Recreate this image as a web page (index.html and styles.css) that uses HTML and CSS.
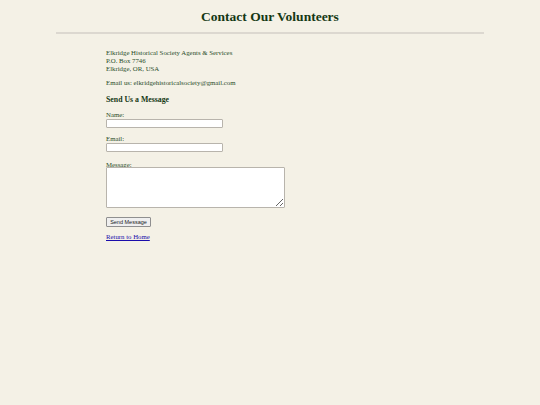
FILE: index.html
```html
<!DOCTYPE html>
<html>
<head>
<meta charset="utf-8">
<title>Contact Our Volunteers</title>
<link rel="stylesheet" href="styles.css">
</head>
<body>
<div class="page">
  <h1 class="title">Contact Our Volunteers</h1>
  <hr class="rule">
  <div class="content">
    <p class="address">Elkridge Historical Society Agents &amp; Services<br>P.O. Box 7746<br>Elkridge, OR, USA</p>
    <p class="email">Email us: elkridgehistoricalsociety@gmail.com</p>
    <h2 class="subtitle">Send Us a Message</h2>
    <form class="form">
      <label class="label">Name:</label>
      <input class="field" type="text">
      <label class="label">Email:</label>
      <input class="field" type="text">
      <label class="label label-msg">Message:</label>
      <textarea class="area"></textarea>
      <button class="btn" type="button">Send Message</button>
    </form>
    <a class="home" href="#">Return to Home</a>
  </div>
</div>
</body>
</html>
```
FILE: styles.css
```css
html, body {
  margin: 0;
  padding: 0;
  background: #f4f1e6;
}
body {
  font-family: "Liberation Serif", "Times New Roman", serif;
  color: #2a4d2a;
  font-size: 6.8px;
  line-height: 8px;
}
.page {
  width: 428px;
  margin: 0 auto;
}
.title {
  margin: 0;
  padding-top: 8px;
  text-align: center;
  font-size: 13.5px;
  line-height: 18px;
  color: #143814;
  font-weight: bold;
}
.rule {
  margin: 6px 0 0 0;
  border: none;
  height: 2px;
  background: #dcd8d0;
}
.content {
  padding-left: 50px;
  padding-top: 15px;
}
.address {
  margin: 0;
}
.email {
  margin: 6px 0 0 0;
}
.subtitle {
  margin: 8px 0 0 0;
  font-size: 7.8px;
  line-height: 10px;
  color: #143814;
}
.form {
  display: flex;
  flex-direction: column;
  align-items: flex-start;
  margin-top: 6px;
}
.label {
  display: block;
  line-height: 8px;
}
.label-msg {
  margin-top: 2px;
}
.field {
  box-sizing: border-box;
  width: 117px;
  height: 9px;
  margin: 0 0 7px 0;
  padding: 0;
  border: 1px solid #b8b4ac;
  border-radius: 1px;
  background: #fff;
}
.area {
  box-sizing: border-box;
  width: 179px;
  height: 41px;
  margin: -2px 0 9px 0;
  padding: 0;
  border: 1px solid #b8b4ac;
  border-radius: 1px;
  background: #fff;
}
.btn {
  box-sizing: border-box;
  width: 45px;
  height: 10px;
  padding: 0;
  font-family: "Liberation Sans", Arial, sans-serif;
  font-size: 5.5px;
  line-height: 8px;
  color: #222;
  background: #efefef;
  border: 1px solid #8f8f8f;
  border-radius: 1px;
}
.home {
  display: inline-block;
  margin-top: 6px;
  color: #1a0dab;
  text-decoration: underline;
}
```
